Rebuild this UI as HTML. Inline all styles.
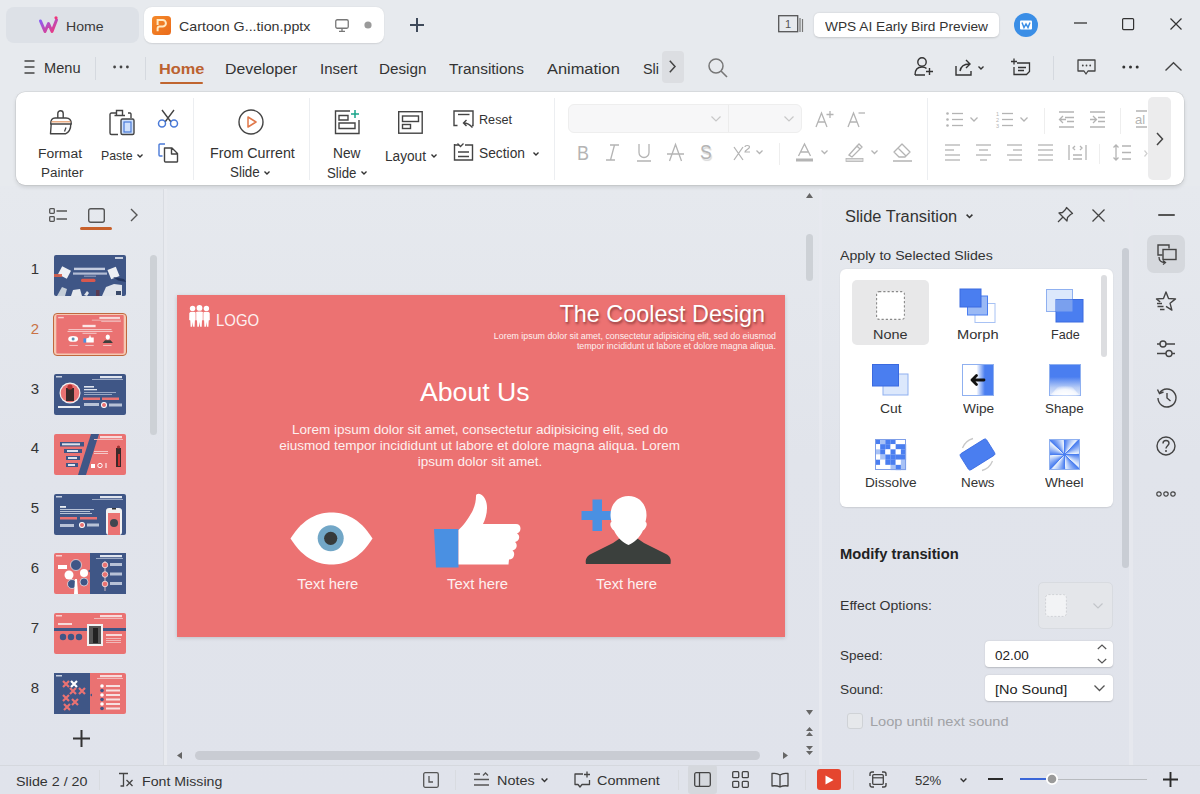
<!DOCTYPE html>
<html><head><meta charset="utf-8">
<style>
*{box-sizing:border-box;margin:0;padding:0}
html,body{width:1200px;height:794px;overflow:hidden}
body{position:relative;background:#e7eaee;font-family:"Liberation Sans",sans-serif;color:#333;font-size:14px}
.a{position:absolute}
.t{position:absolute;white-space:nowrap;line-height:1}
svg{position:absolute;overflow:visible}
</style></head><body>
<div class="a" style="left:0px;top:186px;width:1200px;height:608px;background:linear-gradient(#e6e9ee,#e1e4eb 45%,#e0e3eb);"></div>
<div class="a" style="left:6px;top:7px;width:133px;height:36px;background:#dde1e7;border-radius:8px;"></div>
<svg style="left:39px;top:16px;" width="20" height="18" viewBox="0 0 20 18"><defs><linearGradient id="wg" x1="0" y1="0" x2="1" y2="1"><stop offset="0" stop-color="#8a5cf6"/><stop offset="1" stop-color="#f0367a"/></linearGradient></defs>
<path d="M1.5 5 L6 15.5 L9.5 7.5 L13 15.5 L17.5 4" fill="none" stroke="url(#wg)" stroke-width="3" stroke-linejoin="round" stroke-linecap="round"/>
<circle cx="17" cy="1.8" r="1.6" fill="#f0367a"/></svg>
<div class="t" style="left:66.30px;top:20.18px;font-size:13.01px;color:#3a3a3a;transform:scaleX(1.085);transform-origin:0 0;">Home</div>
<div class="a" style="left:144px;top:7px;width:240px;height:36px;background:#fff;border-radius:8px;box-shadow:0 0.5px 1.5px rgba(0,0,0,.10);"></div>
<svg style="left:151.7px;top:15.7px;" width="19" height="19" viewBox="0 0 19 19"><defs><linearGradient id="pg" x1="0" y1="0" x2="1" y2="1"><stop offset="0" stop-color="#f58a2a"/><stop offset="1" stop-color="#ea6a1a"/></linearGradient></defs>
<rect x="0" y="0" width="19" height="19" rx="3.5" fill="url(#pg)"/>
<path d="M5.6 15.3 V12.6 Q5.6 10.6 7.8 10.6 H10.6 A3.3 3.3 0 0 0 10.6 4 H5.6 V9" fill="none" stroke="#ffe9c2" stroke-width="2"/></svg>
<div class="t" style="left:178.50px;top:19.84px;font-size:13.42px;color:#333;transform:scaleX(1.062);transform-origin:0 0;">Cartoon G...tion.pptx</div>
<svg style="left:335px;top:19px;" width="14" height="13" viewBox="0 0 14 13"><rect x="0.75" y="0.75" width="12.5" height="8.5" rx="1.5" fill="none" stroke="#777" stroke-width="1.3"/>
<path d="M4 12.3 H10 M7 9.5 V12" stroke="#777" stroke-width="1.3"/></svg>
<svg style="left:364px;top:21px;" width="8" height="8" viewBox="0 0 8 8"><circle cx="4" cy="4" r="3.6" fill="#9a9a9a"/></svg>
<svg style="left:410px;top:18px;" width="14" height="14" viewBox="0 0 14 14"><path d="M7 0 V14 M0 7 H14" stroke="#3f4a5a" stroke-width="2"/></svg>
<svg style="left:778px;top:15px;" width="26" height="18" viewBox="0 0 26 18"><rect x="0.7" y="0.7" width="19" height="16" fill="none" stroke="#555" stroke-width="1.3"/>
<text x="10" y="13.2" font-size="11" text-anchor="middle" fill="#555" font-family="Liberation Sans">1</text>
<path d="M22 3 V17 M24.5 4 V17" stroke="#777" stroke-width="1.2"/></svg>
<div class="a" style="left:814px;top:13px;width:184.5px;height:24px;background:#fff;border-radius:5px;box-shadow:0 0.5px 2px rgba(0,0,0,.15);"></div>
<div class="t" style="left:825.00px;top:20.27px;font-size:13.15px;color:#333;transform:scaleX(1.043);transform-origin:0 0;">WPS AI Early Bird Preview</div>
<svg style="left:1014px;top:13px;" width="24" height="24" viewBox="0 0 24 24"><circle cx="12" cy="12" r="12" fill="#3a8ee6"/>
<rect x="6" y="7.5" width="12" height="9" rx="1" fill="#fff"/>
<path d="M8 9.5 L10 14.5 L12 11 L14 14.5 L16 9.5" fill="none" stroke="#3a8ee6" stroke-width="1.5"/></svg>
<svg style="left:1074px;top:22px;" width="13" height="2" viewBox="0 0 13 2"><path d="M0 1 H13" stroke="#333" stroke-width="1.3"/></svg>
<svg style="left:1122px;top:18px;" width="12" height="12" viewBox="0 0 12 12"><rect x="0.6" y="0.6" width="11" height="11" rx="1" fill="none" stroke="#333" stroke-width="1.2"/></svg>
<svg style="left:1170px;top:18px;" width="12" height="12" viewBox="0 0 12 12"><path d="M0.5 0.5 L11.5 11.5 M11.5 0.5 L0.5 11.5" stroke="#333" stroke-width="1.2"/></svg>
<svg style="left:24px;top:60px;" width="11" height="14" viewBox="0 0 11 14"><path d="M0.5 1 H10.5 M0.5 7 H10.5 M0.5 13 H10.5" stroke="#444" stroke-width="1.4"/></svg>
<div class="t" style="left:44.00px;top:61.36px;font-size:14.11px;color:#333;transform:scaleX(1.035);transform-origin:0 0;">Menu</div>
<div class="a" style="left:95px;top:57px;width:1px;height:23px;background:#d5d9df;"></div>
<svg style="left:113px;top:65px;" width="16" height="4" viewBox="0 0 16 4"><circle cx="1.6" cy="2" r="1.4" fill="#444"/><circle cx="8" cy="2" r="1.4" fill="#444"/><circle cx="14.4" cy="2" r="1.4" fill="#444"/></svg>
<div class="a" style="left:145px;top:57px;width:1px;height:23px;background:#d5d9df;"></div>
<div class="t" style="left:158.75px;top:61.21px;font-size:15.34px;color:#bb6230;font-weight:700;transform:scaleX(1.066);transform-origin:0 0;">Home</div>
<div class="a" style="left:160px;top:81.5px;width:43px;height:2.3px;background:#c0652f;border-radius:2px;"></div>
<div class="t" style="left:224.50px;top:61.21px;font-size:15.34px;color:#333;transform:scaleX(1.033);transform-origin:0 0;">Developer</div>
<div class="t" style="left:319.50px;top:61.21px;font-size:15.34px;color:#333;transform:scaleX(0.978);transform-origin:0 0;">Insert</div>
<div class="t" style="left:378.75px;top:61.21px;font-size:15.34px;color:#333;transform:scaleX(0.994);transform-origin:0 0;">Design</div>
<div class="t" style="left:449.00px;top:61.21px;font-size:15.34px;color:#333;transform:scaleX(1.007);transform-origin:0 0;">Transitions</div>
<div class="t" style="left:547.00px;top:61.21px;font-size:15.34px;color:#333;transform:scaleX(1.070);transform-origin:0 0;">Animation</div>
<div class="t" style="left:643.00px;top:61.21px;font-size:15.34px;color:#333;transform:scaleX(0.940);transform-origin:0 0;">Sli</div>
<div class="a" style="left:662px;top:51px;width:22px;height:32px;background:#dcdee2;border-radius:4px;"></div>
<svg style="left:669px;top:60px;" width="7" height="13" viewBox="0 0 7 13"><path d="M0.8 0.8 L6 6.5 L0.8 12.2" fill="none" stroke="#444" stroke-width="1.5"/></svg>
<svg style="left:708px;top:58px;" width="20" height="20" viewBox="0 0 20 20"><circle cx="8" cy="8" r="7" fill="none" stroke="#777" stroke-width="1.5"/><path d="M13 13 L19 19" stroke="#777" stroke-width="1.6"/></svg>
<svg style="left:914px;top:57px;" width="20" height="19" viewBox="0 0 20 19"><circle cx="8" cy="5" r="4.2" fill="none" stroke="#333" stroke-width="1.4"/>
<path d="M1 18 C1 12.5 4 10 8 10 C10 10 11.5 10.5 12.5 11.5 M1 18 H11" fill="none" stroke="#333" stroke-width="1.4"/>
<path d="M15.5 11 V18 M12 14.5 H19" stroke="#333" stroke-width="1.4"/></svg>
<svg style="left:955px;top:59px;" width="20" height="17" viewBox="0 0 20 17"><path d="M1 7 V16 H16 V12" fill="none" stroke="#333" stroke-width="1.4"/>
<path d="M5 12 C6 7 9 5 14 5 M11 1 L15 5 L11 9" fill="none" stroke="#333" stroke-width="1.4"/></svg>
<svg style="left:978px;top:66px;" width="6" height="4" viewBox="0 0 6 4"><path d="M0.5 0.5 L3 3 L5.5 0.5" fill="none" stroke="#333" stroke-width="1.4"/></svg>
<svg style="left:1011px;top:58px;" width="20" height="18" viewBox="0 0 20 18"><path d="M0 3.5 H6 M3 0.5 V6.5" stroke="#333" stroke-width="1.3"/>
<path d="M6 5 H18.5 V13.5 L15.5 16.5 H3 V9" fill="none" stroke="#333" stroke-width="1.3"/>
<path d="M7 9.5 H15 M7 12.5 H13" stroke="#333" stroke-width="1.3"/></svg>
<div class="a" style="left:1053px;top:56px;width:1px;height:24px;background:#d5d9df;"></div>
<svg style="left:1077px;top:59px;" width="19" height="17" viewBox="0 0 19 17"><path d="M1 1 H18 V12 H11 L9 15 L7 12 H1 Z" fill="none" stroke="#444" stroke-width="1.3" stroke-linejoin="round"/>
<circle cx="5.8" cy="6.5" r="0.9" fill="#444"/><circle cx="9.5" cy="6.5" r="0.9" fill="#444"/><circle cx="13.2" cy="6.5" r="0.9" fill="#444"/></svg>
<svg style="left:1122px;top:65px;" width="17" height="4" viewBox="0 0 17 4"><circle cx="1.8" cy="2" r="1.5" fill="#333"/><circle cx="8.5" cy="2" r="1.5" fill="#333"/><circle cx="15.2" cy="2" r="1.5" fill="#333"/></svg>
<svg style="left:1165px;top:62px;" width="17" height="9" viewBox="0 0 17 9"><path d="M0.5 8.5 L8.5 0.8 L16.5 8.5" fill="none" stroke="#444" stroke-width="1.4"/></svg>
<div class="a" style="left:15.8px;top:92px;width:1168.2px;height:92.5px;background:#fff;border-radius:9px;box-shadow:0 2px 4px rgba(0,0,0,.13),0 0 0.5px 0.5px rgba(0,0,0,.10);"></div>
<svg style="left:49px;top:110px;" width="24" height="25" viewBox="0 0 24 25"><path d="M8.8 8 V3.5 A2.7 2.7 0 0 1 14.2 3.5 V8" fill="none" stroke="#444" stroke-width="1.4"/>
<path d="M1.7 14 C1.7 10 3 8 6 8 H17 C20 8 22.3 10 22.3 14 Z" fill="none" stroke="#444" stroke-width="1.4" stroke-linejoin="round"/>
<path d="M2.5 11.8 H21.5" stroke="#e8a070" stroke-width="1.3"/>
<path d="M2.2 14 L1.5 23.8 H16.5 C19.5 22.5 21.8 19 21.8 14" fill="none" stroke="#444" stroke-width="1.4" stroke-linejoin="round"/>
<path d="M15.5 21.5 L17 17.5" stroke="#444" stroke-width="1.3"/></svg>
<div class="t" style="left:38.20px;top:146.70px;font-size:13.70px;color:#333;transform:scaleX(1.015);transform-origin:0 0;">Format</div>
<div class="t" style="left:41.00px;top:166.00px;font-size:13.70px;color:#333;transform:scaleX(0.981);transform-origin:0 0;">Painter</div>
<svg style="left:109px;top:109px;" width="27" height="27" viewBox="0 0 27 27"><path d="M7 4 H2.5 A1.5 1.5 0 0 0 1 5.5 V24 A1.5 1.5 0 0 0 2.5 25.5 H9" fill="none" stroke="#444" stroke-width="1.4"/>
<path d="M7.5 1.5 H13.5 V6.5 H7.5 Z M5.5 6.5 H16" fill="none" stroke="#444" stroke-width="1.4"/>
<path d="M19 4 H21 A1.2 1.2 0 0 1 22 5.5 V9" fill="none" stroke="#444" stroke-width="1.4"/>
<rect x="12" y="10" width="13" height="15.5" rx="1.5" fill="#cfe0fb" stroke="#444" stroke-width="1.4"/>
<rect x="15" y="13" width="7" height="10" fill="none" stroke="#4a7ad8" stroke-width="1.2"/></svg>
<div class="t" style="left:100.60px;top:149.24px;font-size:13.42px;color:#333;transform:scaleX(0.921);transform-origin:0 0;">Paste</div>
<svg style="left:136.8px;top:153.8px;" width="6" height="4" viewBox="0 0 6 4"><path d="M0.5 0.5 L3 3 L5.5 0.5" fill="none" stroke="#333" stroke-width="1.4"/></svg>
<svg style="left:157px;top:109px;" width="22" height="19" viewBox="0 0 22 19"><path d="M5 1 L14 13 M17 1 L8 13" stroke="#444" stroke-width="1.4"/>
<circle cx="5" cy="14.5" r="3.5" fill="none" stroke="#4a7ad8" stroke-width="1.5"/>
<circle cx="17" cy="14.5" r="3.5" fill="none" stroke="#4a7ad8" stroke-width="1.5"/></svg>
<svg style="left:158px;top:142px;" width="21" height="21" viewBox="0 0 21 21"><path d="M7 2 H2 A1 1 0 0 0 1 3 V13 A1 1 0 0 0 2 14 H4.5" fill="none" stroke="#4a7ad8" stroke-width="1.4"/>
<path d="M6.5 6 H14 L19.5 11.5 V19.5 A0.8 0.8 0 0 1 18.5 20 H7.5 A1 1 0 0 1 6.5 19 Z M13.5 6 V12 H19.5" fill="none" stroke="#444" stroke-width="1.4" stroke-linejoin="round"/></svg>
<div class="a" style="left:193px;top:98px;width:1px;height:82px;background:#eceef1;"></div>
<svg style="left:238px;top:109px;" width="26" height="26" viewBox="0 0 26 26"><circle cx="13" cy="13" r="12" fill="none" stroke="#444" stroke-width="1.4"/>
<path d="M10 8 L18 13 L10 18 Z" fill="none" stroke="#e0784a" stroke-width="1.5" stroke-linejoin="round"/></svg>
<div class="t" style="left:209.80px;top:146.67px;font-size:13.97px;color:#333;transform:scaleX(1.021);transform-origin:0 0;">From Current</div>
<div class="t" style="left:230.20px;top:165.32px;font-size:14.38px;color:#333;transform:scaleX(0.931);transform-origin:0 0;">Slide</div>
<svg style="left:264.3px;top:171px;" width="6" height="4" viewBox="0 0 6 4"><path d="M0.5 0.5 L3 3 L5.5 0.5" fill="none" stroke="#333" stroke-width="1.4"/></svg>
<div class="a" style="left:309px;top:98px;width:1px;height:82px;background:#eceef1;"></div>
<svg style="left:334px;top:109px;" width="27" height="26" viewBox="0 0 27 26"><path d="M16 2 H1.5 V24.5 H25 V11" fill="none" stroke="#444" stroke-width="1.4"/>
<path d="M5 6.5 H14 V11 H5 Z M5 14 H21 V19.5 H5 Z" fill="none" stroke="#444" stroke-width="1.4"/>
<path d="M21 1 V9 M17 5 H25" stroke="#1aa58a" stroke-width="1.5"/></svg>
<div class="t" style="left:332.50px;top:146.97px;font-size:13.97px;color:#333;transform:scaleX(0.982);transform-origin:0 0;">New</div>
<div class="t" style="left:326.50px;top:165.62px;font-size:14.38px;color:#333;transform:scaleX(0.922);transform-origin:0 0;">Slide</div>
<svg style="left:360.5px;top:171px;" width="6" height="4" viewBox="0 0 6 4"><path d="M0.5 0.5 L3 3 L5.5 0.5" fill="none" stroke="#333" stroke-width="1.4"/></svg>
<svg style="left:398px;top:111px;" width="25" height="23" viewBox="0 0 25 23"><rect x="0.7" y="0.7" width="23.5" height="21.5" fill="none" stroke="#444" stroke-width="1.4"/>
<rect x="4.5" y="5" width="16" height="5.5" fill="none" stroke="#444" stroke-width="1.4"/>
<rect x="4.5" y="13.5" width="8" height="4" fill="none" stroke="#444" stroke-width="1.4"/></svg>
<div class="t" style="left:384.50px;top:149.02px;font-size:14.38px;color:#333;transform:scaleX(0.949);transform-origin:0 0;">Layout</div>
<svg style="left:430.5px;top:154px;" width="6" height="4" viewBox="0 0 6 4"><path d="M0.5 0.5 L3 3 L5.5 0.5" fill="none" stroke="#333" stroke-width="1.4"/></svg>
<svg style="left:453px;top:110px;" width="21" height="19" viewBox="0 0 21 19"><path d="M4.5 15.5 H1 V1 H20 V15.5 H19" fill="none" stroke="#444" stroke-width="1.4"/>
<path d="M5 4.5 H16.5" stroke="#444" stroke-width="1.4"/>
<path d="M19.5 17.5 C17 14.5 14.5 13 10.5 13 M13.5 10 L10.5 13 L13.5 16" fill="none" stroke="#444" stroke-width="1.4"/></svg>
<div class="t" style="left:479.00px;top:113.40px;font-size:13.70px;color:#333;transform:scaleX(0.923);transform-origin:0 0;">Reset</div>
<svg style="left:453px;top:143px;" width="21" height="18" viewBox="0 0 21 18"><path d="M1.5 1 V17 H19.5 V2 H12 M6 2 H1.5" fill="none" stroke="#444" stroke-width="1.4"/>
<path d="M4.5 0.5 L7.5 3.5 L10.5 0.5" fill="none" stroke="#444" stroke-width="1.3"/>
<path d="M5 9 H16 M5 13.5 H16" stroke="#444" stroke-width="1.4"/></svg>
<div class="t" style="left:479.00px;top:146.32px;font-size:14.38px;color:#333;transform:scaleX(0.959);transform-origin:0 0;">Section</div>
<svg style="left:532.5px;top:151.5px;" width="6" height="4" viewBox="0 0 6 4"><path d="M0.5 0.5 L3 3 L5.5 0.5" fill="none" stroke="#333" stroke-width="1.4"/></svg>
<div class="a" style="left:554px;top:98px;width:1px;height:82px;background:#eceef1;"></div>
<div class="a" style="left:568px;top:104px;width:234px;height:29px;background:#f7f7f8;border-radius:6px;border:1px solid #eeeeee;"></div>
<div class="a" style="left:728px;top:105px;width:1px;height:27px;background:#ececec;"></div>
<svg style="left:711px;top:116px;" width="10" height="6" viewBox="0 0 10 6"><path d="M0.5 0.5 L5 5 L9.5 0.5" fill="none" stroke="#c8c8c8" stroke-width="1.2"/></svg>
<svg style="left:784px;top:116px;" width="10" height="6" viewBox="0 0 10 6"><path d="M0.5 0.5 L5 5 L9.5 0.5" fill="none" stroke="#c8c8c8" stroke-width="1.2"/></svg>
<svg style="left:815px;top:110px;" width="20" height="18" viewBox="0 0 20 18"><path d="M1 17 L6.5 3 L12 17 M3 12 H10" fill="none" stroke="#b4b4b4" stroke-width="1.3"/>
<path d="M15 1 V8 M11.5 4.5 H18.5" stroke="#b4b4b4" stroke-width="1.3"/></svg>
<svg style="left:847px;top:110px;" width="20" height="18" viewBox="0 0 20 18"><path d="M1 17 L6.5 3 L12 17 M3 12 H10" fill="none" stroke="#b4b4b4" stroke-width="1.3"/>
<path d="M11.5 3 H18" stroke="#b4b4b4" stroke-width="1.3"/></svg>
<div class="t" style="left:576.50px;top:142.67px;font-size:20px;color:#b4b4b4;transform:scaleX(0.9);transform-origin:left;">B</div>
<svg style="left:605px;top:144px;" width="15" height="17" viewBox="0 0 15 17"><path d="M5 1 H14 M1 16 H10 M9.5 1 L5.5 16" fill="none" stroke="#b4b4b4" stroke-width="1.3"/></svg>
<svg style="left:636px;top:143px;" width="16" height="19" viewBox="0 0 16 19"><path d="M3 1 V9.5 A5 5 0 0 0 13 9.5 V1 M1 18 H15" fill="none" stroke="#b4b4b4" stroke-width="1.3"/></svg>
<svg style="left:666px;top:143px;" width="19" height="19" viewBox="0 0 19 19"><path d="M3.5 18 L9.5 1.5 L15.5 18 M1 11 H18" fill="none" stroke="#b4b4b4" stroke-width="1.3"/></svg>
<div class="t" style="left:699.50px;top:143.49px;font-size:19.5px;color:#b4b4b4;transform:scaleX(0.9);transform-origin:left;text-shadow:1px 1.5px 1px #d8d8d8;">S</div>
<svg style="left:733px;top:144px;" width="18" height="17" viewBox="0 0 18 17"><path d="M1 3 L10 16 M10 3 L1 16" stroke="#b4b4b4" stroke-width="1.3"/><path d="M12 3 C12 1 16.5 1 16.5 3 C16.5 5 12 6 12 8 H17" fill="none" stroke="#b4b4b4" stroke-width="1.2"/></svg>
<svg style="left:756px;top:150px;" width="7" height="5" viewBox="0 0 7 5"><path d="M0.5 0.5 L3.5 3.5 L6.5 0.5" fill="none" stroke="#b4b4b4" stroke-width="1.3"/></svg>
<div class="a" style="left:779px;top:143px;width:1px;height:22px;background:#eeeeee;"></div>
<svg style="left:795px;top:143px;" width="19" height="19" viewBox="0 0 19 19"><path d="M3.5 13 L9.5 1 L15.5 13 M5.5 9 H13.5" fill="none" stroke="#b4b4b4" stroke-width="1.3"/><rect x="1" y="15.5" width="17" height="3" fill="#b4b4b4"/></svg>
<svg style="left:821px;top:150px;" width="7" height="5" viewBox="0 0 7 5"><path d="M0.5 0.5 L3.5 3.5 L6.5 0.5" fill="none" stroke="#b4b4b4" stroke-width="1.3"/></svg>
<svg style="left:845px;top:143px;" width="20" height="19" viewBox="0 0 20 19"><path d="M4 12 L12 3 L15 6 L7 14 Z M12 3 L14 1 L17 4 L15 6" fill="none" stroke="#b4b4b4" stroke-width="1.3"/><rect x="1" y="15.5" width="17" height="3" fill="#dcdcdc" stroke="#b4b4b4" stroke-width="0.8"/></svg>
<svg style="left:871px;top:150px;" width="7" height="5" viewBox="0 0 7 5"><path d="M0.5 0.5 L3.5 3.5 L6.5 0.5" fill="none" stroke="#b4b4b4" stroke-width="1.3"/></svg>
<svg style="left:892px;top:143px;" width="21" height="19" viewBox="0 0 21 19"><path d="M7 14 L2 9 L10 1 L18 9 L13 14 Z M6 5 L14 13 M1 18 H20" fill="none" stroke="#b4b4b4" stroke-width="1.3" stroke-linejoin="round"/></svg>
<div class="a" style="left:927px;top:98px;width:1px;height:82px;background:#eceef1;"></div>
<svg style="left:946px;top:112px;" width="18" height="16" viewBox="0 0 18 16"><circle cx="1.5" cy="1.5" r="1.3" fill="#b4b4b4"/><circle cx="1.5" cy="7.5" r="1.3" fill="#b4b4b4"/><circle cx="1.5" cy="13.5" r="1.3" fill="#b4b4b4"/><path d="M6 1.5 H17" stroke="#b4b4b4" stroke-width="1.3"/><path d="M6 7.5 H17" stroke="#b4b4b4" stroke-width="1.3"/><path d="M6 13.5 H17" stroke="#b4b4b4" stroke-width="1.3"/></svg>
<svg style="left:970px;top:117px;" width="8" height="5" viewBox="0 0 8 5"><path d="M0.5 0.5 L4 4 L7.5 0.5" fill="none" stroke="#b4b4b4" stroke-width="1.3"/></svg>
<svg style="left:996px;top:111px;" width="18" height="17" viewBox="0 0 18 17"><text x="0" y="5" font-size="5.5" fill="#b4b4b4" font-family="Liberation Sans">1</text><text x="0" y="11" font-size="5.5" fill="#b4b4b4" font-family="Liberation Sans">2</text><text x="0" y="16.5" font-size="5.5" fill="#b4b4b4" font-family="Liberation Sans">3</text><path d="M6 2.5 H17" stroke="#b4b4b4" stroke-width="1.3"/><path d="M6 8.5 H17" stroke="#b4b4b4" stroke-width="1.3"/><path d="M6 14.5 H17" stroke="#b4b4b4" stroke-width="1.3"/></svg>
<svg style="left:1020px;top:117px;" width="8" height="5" viewBox="0 0 8 5"><path d="M0.5 0.5 L4 4 L7.5 0.5" fill="none" stroke="#b4b4b4" stroke-width="1.3"/></svg>
<div class="a" style="left:1044px;top:108px;width:1px;height:26px;background:#eeeeee;"></div>
<svg style="left:1058px;top:111px;" width="17" height="17" viewBox="0 0 17 17"><path d="M1 1 H16 M1 16 H16 M7 6.5 H16 M9 10.5 H16 M5 5 L1.5 8.5 L5 12 M1.5 8.5 H8" fill="none" stroke="#b4b4b4" stroke-width="1.3"/></svg>
<svg style="left:1089px;top:111px;" width="17" height="17" viewBox="0 0 17 17"><path d="M1 1 H16 M1 16 H16 M9 6.5 H16 M9 10.5 H16 M4 5 L7.5 8.5 L4 12 M1 8.5 H7.5" fill="none" stroke="#b4b4b4" stroke-width="1.3"/></svg>
<div class="a" style="left:1120px;top:108px;width:1px;height:26px;background:#eeeeee;"></div>
<svg style="left:1135px;top:110px;" width="13" height="18" viewBox="0 0 13 18"><path d="M1 1 H12 M1 17 H12" stroke="#b4b4b4" stroke-width="1.3"/><text x="0" y="13.5" font-size="13" fill="#b4b4b4" font-family="Liberation Sans">al</text></svg>
<svg style="left:945px;top:144px;" width="16" height="17" viewBox="0 0 16 17"><path d="M0 1 H15" stroke="#b4b4b4" stroke-width="1.3"/><path d="M0 6 H9" stroke="#b4b4b4" stroke-width="1.3"/><path d="M0 11 H15" stroke="#b4b4b4" stroke-width="1.3"/><path d="M0 16 H15" stroke="#b4b4b4" stroke-width="1.3"/></svg>
<svg style="left:976px;top:144px;" width="16" height="17" viewBox="0 0 16 17"><path d="M0 1 H15" stroke="#b4b4b4" stroke-width="1.3"/><path d="M3 6 H12" stroke="#b4b4b4" stroke-width="1.3"/><path d="M0 11 H15" stroke="#b4b4b4" stroke-width="1.3"/><path d="M4 16 H11" stroke="#b4b4b4" stroke-width="1.3"/></svg>
<svg style="left:1007px;top:144px;" width="16" height="17" viewBox="0 0 16 17"><path d="M0 1 H15" stroke="#b4b4b4" stroke-width="1.3"/><path d="M6 6 H15" stroke="#b4b4b4" stroke-width="1.3"/><path d="M0 11 H15" stroke="#b4b4b4" stroke-width="1.3"/><path d="M2 16 H15" stroke="#b4b4b4" stroke-width="1.3"/></svg>
<svg style="left:1038px;top:144px;" width="16" height="17" viewBox="0 0 16 17"><path d="M0 1 H15" stroke="#b4b4b4" stroke-width="1.3"/><path d="M0 6 H15" stroke="#b4b4b4" stroke-width="1.3"/><path d="M0 11 H15" stroke="#b4b4b4" stroke-width="1.3"/><path d="M0 16 H15" stroke="#b4b4b4" stroke-width="1.3"/></svg>
<svg style="left:1068px;top:144px;" width="19" height="17" viewBox="0 0 19 17"><path d="M1 1 V16 M18 1 V16 M5 11 H14 M5 15 H14 M7 2 L5 4 L7 6 M12 2 L14 4 L12 6" fill="none" stroke="#b4b4b4" stroke-width="1.3"/></svg>
<div class="a" style="left:1099px;top:144px;width:1px;height:20px;background:#eeeeee;"></div>
<svg style="left:1113px;top:144px;" width="19" height="17" viewBox="0 0 19 17"><path d="M3 1 V16 M0.5 3.5 L3 1 L5.5 3.5 M0.5 13.5 L3 16 L5.5 13.5 M9 2 H18 M9 8.5 H18 M9 15 H18" fill="none" stroke="#b4b4b4" stroke-width="1.3"/></svg>
<svg style="left:1144px;top:150px;" width="4" height="7" viewBox="0 0 4 7"><path d="M0.5 0.5 L3 3.5 L0.5 6.5" fill="none" stroke="#d0d0d0" stroke-width="1.2"/></svg>
<div class="a" style="left:1148px;top:97px;width:23px;height:83px;background:#ececed;border-radius:5px;"></div>
<svg style="left:1156px;top:132px;" width="8" height="14" viewBox="0 0 8 14"><path d="M1 1 L6.5 7 L1 13" fill="none" stroke="#444" stroke-width="1.5"/></svg>
<svg style="left:49px;top:208px;" width="19" height="15" viewBox="0 0 19 15"><rect x="0.7" y="0.7" width="4.6" height="4.6" rx="0.8" fill="none" stroke="#555" stroke-width="1.3"/>
<rect x="0.7" y="8.7" width="4.6" height="4.6" rx="0.8" fill="none" stroke="#555" stroke-width="1.3"/>
<path d="M7.5 3 H18 M7.5 11 H18" stroke="#555" stroke-width="1.3"/></svg>
<svg style="left:88px;top:208px;" width="17" height="15" viewBox="0 0 17 15"><rect x="0.7" y="0.7" width="15.6" height="13.6" rx="2" fill="none" stroke="#555" stroke-width="1.4"/></svg>
<div class="a" style="left:80px;top:227px;width:32px;height:3px;background:#c8602a;border-radius:2px;"></div>
<svg style="left:130px;top:208px;" width="8" height="14" viewBox="0 0 8 14"><path d="M1 1 L7 7 L1 13" fill="none" stroke="#555" stroke-width="1.4"/></svg>
<div class="a" style="left:150px;top:255px;width:7px;height:180px;background:#cdd1d6;border-radius:4px;"></div>
<svg style="left:54px;top:254.5px;" width="72" height="41" viewBox="0 0 72 41"><rect width="72" height="41" rx="2" fill="#3f5686"/>
<rect x="20" y="12.7" width="31" height="2.4" fill="#c5cde0"/><rect x="19" y="17.5" width="34" height="2.2" fill="#b3bdd4"/><rect x="30" y="20.6" width="12" height="1.2" fill="#8a98b8"/>
<rect x="27" y="23.7" width="14.5" height="3.2" rx="1.5" fill="#d8584e"/>
<g transform="rotate(28 10.5 17.5)"><rect x="5.5" y="13" width="10" height="9" fill="#eef0f4"/></g><rect x="0" y="19" width="8" height="3" fill="#d8604a" opacity="0.9"/>
<g transform="rotate(-22 59.5 18)"><rect x="55" y="13" width="9" height="10" fill="#eef0f4"/></g><path d="M59 22 L70 24 L72 27 L64 25.5 Z" fill="#243660"/>
<path d="M48 41 L52 32 L60 29 L68 30 L68 41 Z" fill="#dfe3ea"/><rect x="62" y="36" width="5" height="4" fill="#3a4a6a"/>
<path d="M17 41 L19 35 L26 34 L28 41 Z" fill="#e6e9ee"/><path d="M30 40 L33 36 L35 38 L33 41 Z" fill="#e0e4ea"/>
<path d="M3 41 L8 32 L13 34 L11 41 Z" fill="#c5ced8"/><rect x="42" y="35" width="3.5" height="6" fill="#5a3a50"/>
<rect x="61" y="2" width="8" height="2" fill="#c8d0e0"/></svg>
<div class="t" style="left:25.00px;width:20px;text-align:center;top:261.30px;font-size:15px;color:#333;">1</div>
<div class="a" style="left:52.8px;top:312.8px;width:74.4px;height:43px;background:#f6c8b2;border-radius:4px;border:1.3px solid #c0683e;"></div>
<svg style="left:55px;top:315.3px;" width="70" height="38.4" viewBox="0 0 72 41"><rect width="72" height="41" rx="1" fill="#ea7272"/>
<rect x="2" y="2" width="6" height="1.5" fill="#f6d0d0"/><rect x="46" y="2" width="22" height="2.2" fill="#f7dada"/><rect x="38" y="5" width="31" height="1" fill="#f0b8b8"/><rect x="48" y="6.5" width="21" height="1" fill="#f0b8b8"/>
<rect x="28" y="10.5" width="14" height="2.5" fill="#fbe6e6"/>
<rect x="13" y="15" width="46" height="1.1" fill="#f5c8c8"/><rect x="12" y="17" width="48" height="1.1" fill="#f5c8c8"/><rect x="28" y="19" width="15" height="1.1" fill="#f5c8c8"/>
<ellipse cx="18" cy="25.5" rx="5.3" ry="3.2" fill="#fff"/><circle cx="18" cy="25.5" r="1.6" fill="#5f8fb0"/>
<rect x="29" y="25" width="3" height="4.5" fill="#4a90e2"/><path d="M32 25 L35 24 L36 21 L37 24 L40 24 L40 29.5 L32 29.5 Z" fill="#fff"/>
<ellipse cx="55" cy="23.5" rx="2.3" ry="2.8" fill="#fff"/><path d="M49.5 30 L52 27 L58 27 L60.5 30 Z" fill="#3a3f3c"/>
<rect x="14" y="32" width="9" height="1" fill="#f5c8c8"/><rect x="31" y="32" width="9" height="1" fill="#f5c8c8"/><rect x="50" y="32" width="9" height="1" fill="#f5c8c8"/></svg>
<div class="t" style="left:25.00px;width:20px;text-align:center;top:320.80px;font-size:15px;color:#c97245;">2</div>
<svg style="left:54px;top:374px;" width="72" height="41" viewBox="0 0 72 41"><rect width="72" height="41" rx="2" fill="#3f5686"/>
<rect x="2" y="2" width="6" height="1.5" fill="#c8d0e0"/><rect x="46" y="2" width="22" height="2.2" fill="#dfe4ee"/><rect x="38" y="5" width="31" height="1" fill="#9aa8c4"/>
<circle cx="16" cy="19" r="10.5" fill="#f2f2f2"/><circle cx="16" cy="19" r="9.3" fill="#ea7272"/><rect x="12" y="14" width="8" height="13" fill="#3a2a2a"/><circle cx="16" cy="13" r="2.6" fill="#b03030"/>
<rect x="30" y="12" width="10" height="1.6" fill="#dfe4ee"/><rect x="30" y="15" width="13" height="1.3" fill="#dfe4ee"/><rect x="30" y="18" width="32" height="1" fill="#9aa8c4"/><rect x="30" y="20" width="28" height="1" fill="#9aa8c4"/>
<rect x="29" y="23.5" width="17" height="2.5" fill="#ea7272"/><rect x="48" y="23.5" width="17" height="2.5" fill="#ea7272"/>
<rect x="4" y="32" width="22" height="2" fill="#e8ecf2"/><circle cx="50" cy="31" r="3" fill="#fff"/><circle cx="50" cy="31" r="2" fill="#ea7272"/><rect x="30" y="29" width="15" height="3" fill="#b8c2d6"/><rect x="55" y="29.5" width="13" height="3" fill="#b8c2d6"/></svg>
<div class="t" style="left:25.00px;width:20px;text-align:center;top:380.80px;font-size:15px;color:#333;">3</div>
<svg style="left:54px;top:433.5px;" width="72" height="41" viewBox="0 0 72 41"><rect width="72" height="41" rx="2" fill="#ea7272"/>
<path d="M37 0 L45 0 L32 41 L24 41 Z" fill="#3f5686"/>
<rect x="6" y="8" width="24" height="4.5" fill="#3f5686"/><rect x="10" y="15" width="18" height="4" fill="#3f5686"/><rect x="12" y="22" width="14" height="4" fill="#3f5686"/><rect x="12" y="29" width="12" height="4" fill="#3f5686"/>
<rect x="8" y="9.3" width="18" height="2" fill="#dde2ec"/><rect x="13" y="16" width="11" height="2" fill="#dde2ec"/><rect x="14" y="23" width="9" height="2" fill="#dde2ec"/><rect x="14" y="30" width="7" height="2" fill="#dde2ec"/>
<rect x="46" y="2" width="22" height="2.2" fill="#f7dada"/><rect x="40" y="5" width="29" height="1" fill="#f0b8b8"/>
<rect x="40" y="17" width="14" height="1" fill="#f5c8c8"/><rect x="40" y="19" width="14" height="1" fill="#f5c8c8"/>
<rect x="37" y="30" width="4" height="4" fill="#fff"/><circle cx="46" cy="31.5" r="2.2" fill="none" stroke="#fff" stroke-width="1"/><path d="M52 29 V34" stroke="#fff" stroke-width="1"/>
<rect x="62" y="14" width="5" height="19" fill="#3a2a2a"/><circle cx="64.5" cy="13" r="1.6" fill="#a03030"/><rect x="64" y="20" width="2" height="12" fill="#c83030"/></svg>
<div class="t" style="left:25.00px;width:20px;text-align:center;top:440.30px;font-size:15px;color:#333;">4</div>
<svg style="left:54px;top:493.5px;" width="72" height="41" viewBox="0 0 72 41"><rect width="72" height="41" rx="2" fill="#3f5686"/>
<rect x="2" y="2" width="6" height="1.5" fill="#c8d0e0"/><rect x="46" y="2" width="22" height="2.2" fill="#dfe4ee"/><rect x="38" y="5" width="31" height="1" fill="#9aa8c4"/>
<rect x="6" y="12" width="6" height="1.8" fill="#e8ecf2"/><rect x="6" y="15" width="34" height="1" fill="#b8c2d6"/><rect x="6" y="17" width="30" height="1" fill="#b8c2d6"/><rect x="6" y="19" width="32" height="1" fill="#b8c2d6"/>
<rect x="6" y="23" width="17" height="2.5" fill="#ea7272"/><rect x="26" y="23" width="17" height="2.5" fill="#ea7272"/>
<rect x="6" y="30" width="14" height="3" fill="#b8c2d6"/><circle cx="28" cy="31" r="3" fill="#fff"/><circle cx="28" cy="31" r="2" fill="#ea7272"/><rect x="33" y="29.5" width="12" height="3" fill="#b8c2d6"/>
<rect x="52" y="14" width="16" height="27" rx="3" fill="#f2f2f2"/><rect x="54" y="19" width="12" height="22" fill="#ea7272"/><circle cx="60" cy="29" r="4" fill="#3f4650"/><rect x="58" y="14" width="4" height="1.5" fill="#333"/></svg>
<div class="t" style="left:25.00px;width:20px;text-align:center;top:500.30px;font-size:15px;color:#333;">5</div>
<svg style="left:54px;top:553px;" width="72" height="41" viewBox="0 0 72 41"><rect width="72" height="41" rx="2" fill="#ea7272"/>
<rect x="36" y="0" width="36" height="41" fill="#3f5686"/>
<path d="M34 18 L36 16.5 L36 19.5 Z" fill="#3f5686"/>
<rect x="2" y="2" width="6" height="1.5" fill="#f6d0d0"/><rect x="46" y="2" width="22" height="2.2" fill="#dfe4ee"/><rect x="42" y="5" width="27" height="1" fill="#9aa8c4"/>
<rect x="4" y="12" width="9" height="4" fill="#fff"/>
<circle cx="22" cy="12" r="5.5" fill="#3f5686" stroke="#fff" stroke-width="0.6"/><circle cx="15" cy="22" r="4.5" fill="#fff"/><circle cx="30" cy="20" r="4" fill="#fff"/><circle cx="18" cy="31" r="4.5" fill="#3f5686" stroke="#fff" stroke-width="0.6"/><circle cx="30" cy="29" r="4" fill="#3f5686" stroke="#fff" stroke-width="0.6"/>
<path d="M20 41 L21 26 L23 26 L24 41 Z" fill="#fff"/>
<path d="M51 8 V38" stroke="#f0d0d0" stroke-width="0.8"/><circle cx="51" cy="12" r="2.8" fill="#ea7272" stroke="#f6e6e6" stroke-width="0.8"/><circle cx="51" cy="21.5" r="2.8" fill="#ea7272" stroke="#f6e6e6" stroke-width="0.8"/><circle cx="51" cy="31" r="2.8" fill="#ea7272" stroke="#f6e6e6" stroke-width="0.8"/>
<rect x="56" y="10" width="12" height="3" fill="#b8c2d6"/><rect x="56" y="19.5" width="12" height="3" fill="#b8c2d6"/><rect x="56" y="29" width="12" height="3" fill="#b8c2d6"/></svg>
<div class="t" style="left:25.00px;width:20px;text-align:center;top:559.80px;font-size:15px;color:#333;">6</div>
<svg style="left:54px;top:613px;" width="72" height="41" viewBox="0 0 72 41"><rect width="72" height="41" rx="2" fill="#ea7272"/>
<rect x="0" y="15" width="72" height="3" fill="#3f5686"/>
<rect x="2" y="2" width="6" height="1.5" fill="#f6d0d0"/><rect x="46" y="2" width="22" height="2.2" fill="#f7dada"/><rect x="40" y="5" width="29" height="1" fill="#f0b8b8"/>
<rect x="4" y="10" width="14" height="2" fill="#f7dada"/>
<circle cx="9" cy="24" r="3.2" fill="#3f5686"/><circle cx="17" cy="24" r="3.2" fill="#3f5686"/><circle cx="25" cy="24" r="3.2" fill="#3f5686"/>
<rect x="33" y="11" width="16" height="22" fill="#f2f2f2"/><rect x="35" y="13" width="12" height="18" fill="#555"/><rect x="39" y="15" width="5" height="15" fill="#222"/>
<rect x="52" y="21" width="16" height="2" fill="#f7dada"/><rect x="52" y="25" width="15" height="1" fill="#f0b8b8"/><rect x="52" y="27" width="15" height="1" fill="#f0b8b8"/><rect x="52" y="29" width="15" height="1" fill="#f0b8b8"/></svg>
<div class="t" style="left:25.00px;width:20px;text-align:center;top:619.80px;font-size:15px;color:#333;">7</div>
<svg style="left:54px;top:673px;" width="72" height="41" viewBox="0 0 72 41"><rect width="72" height="41" rx="2" fill="#ea7272"/>
<rect x="0" y="0" width="36" height="41" fill="#3f5686"/>
<path d="M36 22 L38 20.5 L38 23.5 Z" fill="#3f5686"/>
<rect x="2" y="2" width="6" height="1.5" fill="#c8d0e0"/><rect x="46" y="2" width="22" height="2.2" fill="#f7dada"/><rect x="43" y="5" width="26" height="1" fill="#f0b8b8"/>
<g stroke="#ea7272" stroke-width="2.2"><path d="M9 8 L15 14 M15 8 L9 14"/><path d="M16 15 L22 21 M22 15 L16 21"/><path d="M25 15 L31 21 M31 15 L25 21"/><path d="M9 22 L15 28 M15 22 L9 28"/><path d="M18 26 L24 32 M24 26 L18 32"/><path d="M10 31 L16 37 M16 31 L10 37"/></g>
<path d="M17 8 L23 14 M23 8 L17 14" stroke="#fff" stroke-width="2.2"/>
<g fill="#fff"><circle cx="48" cy="13" r="1.8"/><circle cx="48" cy="22" r="1.8"/><circle cx="48" cy="31" r="1.8"/></g>
<g fill="#3f5686"><circle cx="48" cy="17.5" r="1.8"/><circle cx="48" cy="26.5" r="1.8"/><circle cx="48" cy="35.5" r="1.8"/></g>
<g fill="#f6e0e0"><rect x="52" y="12" width="14" height="2"/><rect x="52" y="16.5" width="14" height="2"/><rect x="52" y="21" width="14" height="2"/><rect x="52" y="25.5" width="14" height="2"/><rect x="52" y="30" width="14" height="2"/><rect x="52" y="34.5" width="14" height="2"/></g></svg>
<div class="t" style="left:25.00px;width:20px;text-align:center;top:679.80px;font-size:15px;color:#333;">8</div>
<svg style="left:73px;top:730px;" width="17" height="17" viewBox="0 0 17 17"><path d="M8.5 0 V17 M0 8.5 H17" stroke="#333" stroke-width="2"/></svg>
<div class="a" style="left:163px;top:189px;width:1px;height:576px;background:#d9dce2;"></div>
<div class="a" style="left:164px;top:189px;width:2.5px;height:576px;background:#e8eaef;"></div>
<svg style="left:806px;top:193px;" width="7" height="5" viewBox="0 0 7 5"><path d="M0 5 L3.5 0 L7 5 Z" fill="#666"/></svg>
<div class="a" style="left:806px;top:234px;width:7px;height:47px;background:#cdd1d6;border-radius:4px;"></div>
<svg style="left:806px;top:709.7px;" width="7" height="5" viewBox="0 0 7 5"><path d="M0 0 L3.5 5 L7 0 Z" fill="#666"/></svg>
<svg style="left:806px;top:727.3px;" width="7" height="8.6" viewBox="0 0 7 8.6"><path d="M0 4 L3.5 0 L7 4 Z M0 9 L3.5 5 L7 9 Z" fill="#666"/></svg>
<svg style="left:806px;top:746px;" width="7" height="8.6" viewBox="0 0 7 8.6"><path d="M0 0 L3.5 4 L7 0 Z M0 5 L3.5 9 L7 5 Z" fill="#666"/></svg>
<svg style="left:177px;top:751.8px;" width="5.5" height="6.8" viewBox="0 0 5.5 6.8"><path d="M5 0 L0 3.5 L5 7 Z" fill="#666"/></svg>
<div class="a" style="left:195px;top:751px;width:565px;height:9px;background:#c9ccd3;border-radius:4.5px;"></div>
<svg style="left:783px;top:752.3px;" width="5.5" height="6.7" viewBox="0 0 5.5 6.7"><path d="M0 0 L5 3.5 L0 7 Z" fill="#666"/></svg>
<div class="a" style="left:819px;top:189px;width:3px;height:576px;background:#e7e9ef;"></div>
<div class="a" style="left:0px;top:765px;width:1200px;height:1px;background:#d5d8de;"></div>
<div class="a" style="left:177px;top:295px;width:607.5px;height:341.5px;background:#ec7272;box-shadow:0 1px 4px rgba(0,0,0,.16);"></div>
<svg style="left:189px;top:305px;" width="21" height="22" viewBox="0 0 21 22"><g fill="#fff">
<circle cx="3.6" cy="3.4" r="2.7"/><circle cx="10.5" cy="2.9" r="2.9"/><circle cx="17.4" cy="3.4" r="2.7"/>
<path d="M0.3 8 Q0.8 6.8 3.6 6.8 Q6.4 6.8 6.9 8 L7 15 L5.9 15.5 L5.6 21.7 L4.1 21.7 L3.6 17 L3.1 21.7 L1.6 21.7 L1.3 15.5 L0.2 15 Z"/>
<path d="M6.9 7.6 Q7.5 6.4 10.5 6.4 Q13.5 6.4 14.1 7.6 L14.2 15 L13 15.5 L12.7 21.7 L11.1 21.7 L10.5 17 L9.9 21.7 L8.3 21.7 L8 15.5 L6.8 15 Z"/>
<path d="M14.1 8 Q14.6 6.8 17.4 6.8 Q20.2 6.8 20.7 8 L20.8 15 L19.7 15.5 L19.4 21.7 L17.9 21.7 L17.4 17 L16.9 21.7 L15.4 21.7 L15.1 15.5 L14 15 Z"/>
</g>
<g stroke="#ec7272" stroke-width="0.6"><path d="M6.9 8 V15.5 M14.1 8 V15.5"/></g></svg>
<div class="t" style="left:215.50px;top:311.52px;font-size:16.16px;color:#fdf0f0;transform:scaleX(0.925);transform-origin:0 0;-webkit-text-stroke:0;">LOGO</div>
<div class="t" style="left:559.50px;top:303.39px;font-size:23.4px;color:#fff;-webkit-text-stroke:0;text-shadow:1px 2px 2.5px rgba(80,25,25,.6);">The Coolest Design</div>
<div class="t" style="left:456.00px;width:320px;text-align:right;top:332.01px;font-size:8.85px;color:#fdf0f0;-webkit-text-stroke:0;">Lorem ipsum dolor sit amet, consectetur adipisicing elit, sed do eiusmod</div>
<div class="t" style="left:456.00px;width:320px;text-align:right;top:341.51px;font-size:8.85px;color:#fdf0f0;-webkit-text-stroke:0;">tempor incididunt ut labore et dolore magna aliqua.</div>
<div class="t" style="left:374.80px;width:200px;text-align:center;top:378.90px;font-size:26.7px;color:#fff;-webkit-text-stroke:0;">About Us</div>
<div class="t" style="left:250.00px;width:460px;text-align:center;top:423.32px;font-size:13.5px;color:#fdf0f0;-webkit-text-stroke:0;">Lorem ipsum dolor sit amet, consectetur adipisicing elit, sed do</div>
<div class="t" style="left:249.70px;width:460px;text-align:center;top:439.07px;font-size:13.5px;color:#fdf0f0;-webkit-text-stroke:0;">eiusmod tempor incididunt ut labore et dolore magna aliqua. Lorem</div>
<div class="t" style="left:250.00px;width:460px;text-align:center;top:454.82px;font-size:13.5px;color:#fdf0f0;-webkit-text-stroke:0;">ipsum dolor sit amet.</div>
<svg style="left:290px;top:512px;" width="83" height="53" viewBox="0 0 83 53"><path d="M0.5 26.5 C14 5 29 0.5 41.5 0.5 C54 0.5 69 5 82.5 26.5 C69 48 54 52.5 41.5 52.5 C29 52.5 14 48 0.5 26.5 Z" fill="#fff"/>
<circle cx="40.7" cy="26.3" r="13" fill="#72a7c7"/><circle cx="40.7" cy="26.3" r="6.6" fill="#363a3a"/></svg>
<svg style="left:433px;top:493px;" width="88" height="76" viewBox="0 0 88 76"><path d="M1 36 H25.5 V74.5 H3 Z" fill="#4a90e2"/>
<path d="M25.5 37 C30 33 35 26 39 19 C42 13 43 8 43 3 C43 0.5 46 0 48 1.5 C52 4 54 9 54 15 C54 21 52 27 50 31 H83 C86 31 87.5 33 87.5 35.5 C87.5 38 86 40 84 40.5 C86 41.5 86.5 43.5 86 45.5 C85.5 47.5 84 48.5 82 49 C83.5 50 84 52 83.5 54 C83 56 81.5 57 79.5 57.5 C81 58.5 81.5 60.5 81 62.5 C80.5 65 78.5 66.5 76 66.5 L75.5 71.5 H25.5 Z" fill="#fff"/></svg>
<svg style="left:581px;top:495px;" width="91" height="71" viewBox="0 0 91 71"><path d="M11.5 4.5 H21 V16 H31 V25 H21 V36 H11.5 V25 H0.5 V16 H11.5 Z" fill="#4a90e2"/>
<path d="M5 69 C4 64 6 61 10 59 L32 48 L40 42.5 L47.5 49 L55 42.5 L63 48 L85 59 C89 61 90.5 64 89.5 69 Z" fill="#3b403d"/>
<path d="M47.5 1 C58 1 65.5 9 65.5 20 C65.5 22 65 25 64.5 27 C66 27.5 66 30 65 32 C64 34 63 35 62 35.5 C59 42 53 48 47.5 50 C42 48 36 42 33 35.5 C32 35 31 34 30 32 C29 30 29 27.5 30.5 27 C30 25 29.5 22 29.5 20 C29.5 9 37 1 47.5 1 Z" fill="#fff"/></svg>
<div class="t" style="left:277.85px;width:100px;text-align:center;top:577.44px;font-size:14.84px;color:#fdf0f0;-webkit-text-stroke:0;">Text here</div>
<div class="t" style="left:427.60px;width:100px;text-align:center;top:577.44px;font-size:14.84px;color:#fdf0f0;-webkit-text-stroke:0;">Text here</div>
<div class="t" style="left:576.50px;width:100px;text-align:center;top:577.44px;font-size:14.84px;color:#fdf0f0;-webkit-text-stroke:0;">Text here</div>
<div class="t" style="left:844.60px;top:208.38px;font-size:16.44px;color:#333;transform:scaleX(0.998);transform-origin:0 0;">Slide Transition</div>
<svg style="left:966px;top:214.2px;" width="7" height="5" viewBox="0 0 7 5"><path d="M0.6 0.6 L3.5 3.5 L6.4 0.6" fill="none" stroke="#333" stroke-width="1.5"/></svg>
<svg style="left:1057px;top:206px;" width="17" height="17" viewBox="0 0 17 17"><path d="M9.5 1.5 L15.5 7.5 L13.5 8.5 L10.5 11.5 L10 15 L2 7 L5.5 6.5 L8.5 3.5 Z" fill="none" stroke="#444" stroke-width="1.3" stroke-linejoin="round"/>
<path d="M6 11 L1 16" stroke="#444" stroke-width="1.3"/></svg>
<svg style="left:1092px;top:209px;" width="13" height="13" viewBox="0 0 13 13"><path d="M0.5 0.5 L12.5 12.5 M12.5 0.5 L0.5 12.5" stroke="#444" stroke-width="1.3"/></svg>
<div class="t" style="left:840.20px;top:249.02px;font-size:13.56px;color:#333;transform:scaleX(1.046);transform-origin:0 0;">Apply to Selected Slides</div>
<div class="a" style="left:840px;top:269px;width:273px;height:238px;background:#fff;border-radius:6px;box-shadow:0 0.5px 1.5px rgba(0,0,0,.10);"></div>
<div class="a" style="left:1101px;top:275px;width:6px;height:82px;background:#dcdde0;border-radius:3px;"></div>
<div class="a" style="left:852px;top:280px;width:77px;height:65px;background:#e8e8e9;border-radius:5px;"></div>
<svg style="left:876px;top:290.5px;" width="29" height="29" viewBox="0 0 29 29"><rect x="0.6" y="0.6" width="27.8" height="27.8" rx="2.5" fill="#fff" stroke="#888" stroke-width="1.1" stroke-dasharray="2.2 2"/></svg>
<svg style="left:959px;top:288px;" width="37" height="35" viewBox="0 0 37 35"><rect x="16" y="15.5" width="20" height="19" fill="#fff" stroke="#a8c2f4" stroke-width="1"/>
<rect x="8.5" y="8" width="20" height="19" fill="#9ab9f5" stroke="#4a7ef0" stroke-width="1"/>
<rect x="1" y="1" width="21" height="18" fill="#4a7ef0" stroke="#3a6ae0" stroke-width="1"/></svg>
<svg style="left:1046px;top:289px;" width="38" height="34" viewBox="0 0 38 34"><rect x="0.5" y="0.5" width="26" height="22" fill="#dce8fc" stroke="#8fb0f0" stroke-width="1"/>
<rect x="10" y="10.5" width="27" height="22.5" fill="#4a7ef0" stroke="#3a6ae0" stroke-width="1"/>
<rect x="10" y="10.5" width="16.5" height="12" fill="#7aa0ee"/></svg>
<svg style="left:872px;top:364px;" width="37" height="32" viewBox="0 0 37 32"><rect x="11" y="10" width="25" height="21" fill="#dce8fc" stroke="#8fb0f0" stroke-width="1"/>
<rect x="0.5" y="0.5" width="26" height="21.5" fill="#4a7ef0" stroke="#3a6ae0" stroke-width="1"/></svg>
<svg style="left:962px;top:364px;" width="32" height="32" viewBox="0 0 32 32"><defs><linearGradient id="wpg" x1="0" x2="1" y1="0" y2="0"><stop offset="0" stop-color="#fff"/><stop offset="0.45" stop-color="#fff"/><stop offset="0.72" stop-color="#4a7ef0"/><stop offset="1" stop-color="#4a7ef0"/></linearGradient></defs>
<rect x="0.5" y="0.5" width="31" height="31" fill="url(#wpg)" stroke="#8fb0f0" stroke-width="1"/>
<path d="M22 16 H10 M14.5 11.5 L10 16 L14.5 20.5" fill="none" stroke="#111" stroke-width="2.8" stroke-linecap="round" stroke-linejoin="round"/></svg>
<svg style="left:1049px;top:364px;" width="32" height="32" viewBox="0 0 32 32"><defs><linearGradient id="shg" x1="0" x2="0" y1="0" y2="1"><stop offset="0" stop-color="#4a7ef0"/><stop offset="0.4" stop-color="#4a7ef0"/><stop offset="0.75" stop-color="#b8cdf6"/><stop offset="1" stop-color="#dfe8fb"/></linearGradient>
<radialGradient id="shr" cx="0.5" cy="1" r="0.6"><stop offset="0" stop-color="#fff"/><stop offset="0.6" stop-color="#fff" stop-opacity="0.8"/><stop offset="1" stop-color="#fff" stop-opacity="0"/></radialGradient></defs>
<rect x="0.5" y="0.5" width="31" height="31" fill="url(#shg)" stroke="#8fb0f0" stroke-width="1"/>
<path d="M1 31.5 L16 15 L31 31.5 Z" fill="url(#shr)"/></svg>
<svg style="left:875px;top:439px;" width="31" height="31" viewBox="0 0 31 31"><rect x="0.00" y="0.00" width="5.3" height="5.3" fill="#4a7ef0"/><rect x="5.17" y="0.00" width="5.3" height="5.3" fill="#a8c2f6"/><rect x="10.34" y="0.00" width="5.3" height="5.3" fill="#4a7ef0"/><rect x="15.51" y="0.00" width="5.3" height="5.3" fill="#4a7ef0"/><rect x="20.68" y="0.00" width="5.3" height="5.3" fill="#ffffff"/><rect x="25.85" y="0.00" width="5.3" height="5.3" fill="#ffffff"/><rect x="0.00" y="5.17" width="5.3" height="5.3" fill="#ffffff"/><rect x="5.17" y="5.17" width="5.3" height="5.3" fill="#4a7ef0"/><rect x="10.34" y="5.17" width="5.3" height="5.3" fill="#4a7ef0"/><rect x="15.51" y="5.17" width="5.3" height="5.3" fill="#ffffff"/><rect x="20.68" y="5.17" width="5.3" height="5.3" fill="#4a7ef0"/><rect x="25.85" y="5.17" width="5.3" height="5.3" fill="#4a7ef0"/><rect x="0.00" y="10.34" width="5.3" height="5.3" fill="#a8c2f6"/><rect x="5.17" y="10.34" width="5.3" height="5.3" fill="#4a7ef0"/><rect x="10.34" y="10.34" width="5.3" height="5.3" fill="#ffffff"/><rect x="15.51" y="10.34" width="5.3" height="5.3" fill="#4a7ef0"/><rect x="20.68" y="10.34" width="5.3" height="5.3" fill="#ffffff"/><rect x="25.85" y="10.34" width="5.3" height="5.3" fill="#4a7ef0"/><rect x="0.00" y="15.51" width="5.3" height="5.3" fill="#ffffff"/><rect x="5.17" y="15.51" width="5.3" height="5.3" fill="#a8c2f6"/><rect x="10.34" y="15.51" width="5.3" height="5.3" fill="#4a7ef0"/><rect x="15.51" y="15.51" width="5.3" height="5.3" fill="#4a7ef0"/><rect x="20.68" y="15.51" width="5.3" height="5.3" fill="#4a7ef0"/><rect x="25.85" y="15.51" width="5.3" height="5.3" fill="#4a7ef0"/><rect x="0.00" y="20.68" width="5.3" height="5.3" fill="#4a7ef0"/><rect x="5.17" y="20.68" width="5.3" height="5.3" fill="#ffffff"/><rect x="10.34" y="20.68" width="5.3" height="5.3" fill="#4a7ef0"/><rect x="15.51" y="20.68" width="5.3" height="5.3" fill="#4a7ef0"/><rect x="20.68" y="20.68" width="5.3" height="5.3" fill="#ffffff"/><rect x="25.85" y="20.68" width="5.3" height="5.3" fill="#a8c2f6"/><rect x="0.00" y="25.85" width="5.3" height="5.3" fill="#ffffff"/><rect x="5.17" y="25.85" width="5.3" height="5.3" fill="#ffffff"/><rect x="10.34" y="25.85" width="5.3" height="5.3" fill="#ffffff"/><rect x="15.51" y="25.85" width="5.3" height="5.3" fill="#a8c2f6"/><rect x="20.68" y="25.85" width="5.3" height="5.3" fill="#4a7ef0"/><rect x="25.85" y="25.85" width="5.3" height="5.3" fill="#a8c2f6"/><rect x="0.5" y="0.5" width="30" height="30" fill="none" stroke="#7f9fe8" stroke-width="1"/></svg>
<svg style="left:959px;top:436px;" width="37" height="37" viewBox="0 0 37 37"><path d="M3.5 12 A16 16 0 0 1 14 2.5 M33.5 25 A16 16 0 0 1 23 34.5" fill="none" stroke="#c8c8c8" stroke-width="1.3"/>
<g transform="rotate(-32 18.5 18.5)"><rect x="3" y="9" width="31" height="19" rx="2" fill="#4a7ef0" stroke="#3a6ae0" stroke-width="0.8"/></g></svg>
<div class="a" style="left:1049px;top:439px;width:31px;height:31px;background:conic-gradient(from 0deg at 50% 50%,#4a7ef0 0deg,#eaf2fd 40deg,#4a7ef0 45deg,#eaf2fd 85deg,#4a7ef0 90deg,#eaf2fd 130deg,#4a7ef0 135deg,#eaf2fd 175deg,#4a7ef0 180deg,#eaf2fd 220deg,#4a7ef0 225deg,#eaf2fd 265deg,#4a7ef0 270deg,#eaf2fd 310deg,#4a7ef0 315deg,#eaf2fd 355deg,#4a7ef0 360deg);border:1px solid #8fb0f0;"></div>
<div class="t" style="left:873.40px;top:327.54px;font-size:13.42px;color:#333;transform:scaleX(1.075);transform-origin:0 0;">None</div>
<div class="t" style="left:956.70px;top:327.54px;font-size:13.42px;color:#333;transform:scaleX(1.093);transform-origin:0 0;">Morph</div>
<div class="t" style="left:1050.60px;top:327.54px;font-size:13.42px;color:#333;transform:scaleX(0.938);transform-origin:0 0;">Fade</div>
<div class="t" style="left:880.10px;top:401.94px;font-size:13.42px;color:#333;transform:scaleX(1.040);transform-origin:0 0;">Cut</div>
<div class="t" style="left:962.50px;top:401.94px;font-size:13.42px;color:#333;transform:scaleX(1.019);transform-origin:0 0;">Wipe</div>
<div class="t" style="left:1045.40px;top:401.94px;font-size:13.42px;color:#333;transform:scaleX(0.997);transform-origin:0 0;">Shape</div>
<div class="t" style="left:864.80px;top:476.34px;font-size:13.42px;color:#333;transform:scaleX(1.019);transform-origin:0 0;">Dissolve</div>
<div class="t" style="left:961.10px;top:476.34px;font-size:13.42px;color:#333;transform:scaleX(1.001);transform-origin:0 0;">News</div>
<div class="t" style="left:1045.40px;top:476.34px;font-size:13.42px;color:#333;transform:scaleX(1.017);transform-origin:0 0;">Wheel</div>
<div class="t" style="left:840.40px;top:547.06px;font-size:14.11px;color:#222;font-weight:700;transform:scaleX(1.044);transform-origin:0 0;">Modify transition</div>
<div class="t" style="left:840.40px;top:598.92px;font-size:13.56px;color:#333;transform:scaleX(1.038);transform-origin:0 0;">Effect Options:</div>
<div class="a" style="left:1037.5px;top:582px;width:75px;height:47px;background:#e4e6ea;border-radius:5px;border:1px solid #d8dbe0;"></div>
<svg style="left:1045px;top:594px;" width="22" height="23" viewBox="0 0 22 23"><rect x="0.6" y="0.6" width="20.8" height="21.8" rx="3" fill="#f2f3f5" stroke="#d0d2d6" stroke-width="1" stroke-dasharray="2 1.6"/></svg>
<svg style="left:1093px;top:603px;" width="10" height="6" viewBox="0 0 10 6"><path d="M0.5 0.5 L5 5 L9.5 0.5" fill="none" stroke="#c2c5ca" stroke-width="1.2"/></svg>
<div class="t" style="left:840.10px;top:648.82px;font-size:13.56px;color:#333;transform:scaleX(0.993);transform-origin:0 0;">Speed:</div>
<div class="a" style="left:984.5px;top:641px;width:128px;height:26px;background:#fff;border-radius:4px;box-shadow:0 0.5px 1.5px rgba(0,0,0,.18);"></div>
<div class="t" style="left:994.80px;top:648.94px;font-size:13.42px;color:#222;transform:scaleX(1.008);transform-origin:0 0;">02.00</div>
<svg style="left:1097px;top:644px;" width="10" height="20" viewBox="0 0 10 20"><path d="M0.8 5 L5 1 L9.2 5 M0.8 15 L5 19 L9.2 15" fill="none" stroke="#555" stroke-width="1.2"/></svg>
<div class="t" style="left:840.10px;top:682.62px;font-size:13.56px;color:#333;transform:scaleX(1.010);transform-origin:0 0;">Sound:</div>
<div class="a" style="left:984.5px;top:675px;width:128px;height:26px;background:#fff;border-radius:4px;box-shadow:0 0.5px 1.5px rgba(0,0,0,.18);"></div>
<div class="t" style="left:994.80px;top:682.62px;font-size:13.56px;color:#222;transform:scaleX(1.067);transform-origin:0 0;">[No Sound]</div>
<svg style="left:1094px;top:684.5px;" width="11" height="6" viewBox="0 0 11 6"><path d="M0.5 0.5 L5.5 5.5 L10.5 0.5" fill="none" stroke="#555" stroke-width="1.3"/></svg>
<div class="a" style="left:847px;top:712.5px;width:16px;height:16px;background:#e6e8eb;border-radius:3px;border:1px solid #cfd2d6;"></div>
<div class="t" style="left:870.00px;top:715.32px;font-size:13.56px;color:#a0a2a6;transform:scaleX(1.076);transform-origin:0 0;">Loop until next sound</div>
<div class="a" style="left:1122px;top:248px;width:7px;height:320px;background:#c9cdd4;border-radius:3.5px;"></div>
<div class="a" style="left:1129px;top:189px;width:4px;height:576px;background:#e6e8ee;"></div>
<div class="a" style="left:1158px;top:214px;width:17px;height:2px;background:#555;border-radius:1px;"></div>
<div class="a" style="left:1147px;top:235px;width:38px;height:37.5px;background:#d5d8dd;border-radius:7px;"></div>
<svg style="left:1157px;top:244px;" width="20" height="20" viewBox="0 0 20 20"><path d="M12 4.5 V1 H1 V11 H5.5" fill="none" stroke="#444" stroke-width="1.4"/>
<rect x="6" y="5.5" width="13" height="10" fill="none" stroke="#444" stroke-width="1.4"/>
<path d="M2 13 C2 17 4 18.5 8 18.5 M6 16.5 L8.5 18.5 L6 20.5" fill="none" stroke="#444" stroke-width="1.3"/></svg>
<svg style="left:1155px;top:291px;" width="22" height="21" viewBox="0 0 22 21"><path d="M11 15.3 L16.88 19.09 L15.09 12.33 L20.51 7.91 L13.53 7.52 L11 1 L8.47 7.52 L1.49 7.91 L5.2 11" fill="none" stroke="#444" stroke-width="1.4" stroke-linejoin="round"/>
<path d="M2 12.5 H7 M2.5 15.5 H8.5 M5 18.5 H9.5" stroke="#444" stroke-width="1.3"/></svg>
<svg style="left:1156px;top:339px;" width="20" height="20" viewBox="0 0 20 20"><path d="M1 5 H4 M10 5 H19 M1 14.5 H10 M16 14.5 H19" stroke="#444" stroke-width="1.4"/>
<circle cx="7" cy="5" r="3" fill="none" stroke="#444" stroke-width="1.4"/><circle cx="13" cy="14.5" r="3" fill="none" stroke="#444" stroke-width="1.4"/></svg>
<svg style="left:1156px;top:387px;" width="21" height="21" viewBox="0 0 21 21"><path d="M3.5 6 A9 9 0 1 1 2 11" fill="none" stroke="#444" stroke-width="1.4"/>
<path d="M1.5 2.5 L3.5 6.5 L7.5 5" fill="none" stroke="#444" stroke-width="1.4"/>
<path d="M11 6 V11 L14.5 14" fill="none" stroke="#444" stroke-width="1.4"/></svg>
<svg style="left:1156px;top:436px;" width="20" height="20" viewBox="0 0 20 20"><circle cx="10" cy="10" r="9" fill="none" stroke="#444" stroke-width="1.4"/>
<path d="M7 7.5 C7 5.5 8.5 4.5 10 4.5 C11.8 4.5 13 5.7 13 7.3 C13 9.5 10 10 10 12.5" fill="none" stroke="#444" stroke-width="1.4"/>
<circle cx="10" cy="15" r="1" fill="#444"/></svg>
<svg style="left:1156px;top:491px;" width="20" height="6" viewBox="0 0 20 6"><circle cx="3" cy="3" r="2.2" fill="none" stroke="#444" stroke-width="1.2"/><circle cx="10" cy="3" r="2.2" fill="none" stroke="#444" stroke-width="1.2"/><circle cx="17" cy="3" r="2.2" fill="none" stroke="#444" stroke-width="1.2"/></svg>
<div class="t" style="left:16.40px;top:774.70px;font-size:13.70px;color:#333;transform:scaleX(1.044);transform-origin:0 0;">Slide 2 / 20</div>
<div class="a" style="left:99px;top:770px;width:1px;height:20px;background:#d8dbe0;"></div>
<svg style="left:118px;top:772px;" width="16" height="15" viewBox="0 0 16 15"><path d="M1 1.5 H10 M5.5 1.5 V14 H2.5" fill="none" stroke="#444" stroke-width="1.3"/><path d="M8.5 8 L14.5 14 M14.5 8 L8.5 14" stroke="#444" stroke-width="1.3"/></svg>
<div class="t" style="left:142.10px;top:774.70px;font-size:13.70px;color:#333;transform:scaleX(1.035);transform-origin:0 0;">Font Missing</div>
<svg style="left:423px;top:772px;" width="16" height="16" viewBox="0 0 16 16"><rect x="0.7" y="0.7" width="14.6" height="14.6" rx="1.5" fill="none" stroke="#555" stroke-width="1.3"/><path d="M6 4 V10 H10" fill="none" stroke="#555" stroke-width="1.3"/></svg>
<div class="a" style="left:455px;top:770px;width:1px;height:20px;background:#d8dbe0;"></div>
<svg style="left:474px;top:772px;" width="16" height="15" viewBox="0 0 16 15"><path d="M0 2 H6 M0 7.5 H15 M0 13 H15 M9 3.5 L11.5 1 L14 3.5" fill="none" stroke="#555" stroke-width="1.3"/></svg>
<div class="t" style="left:496.70px;top:774.00px;font-size:13.70px;color:#333;transform:scaleX(1.052);transform-origin:0 0;">Notes</div>
<svg style="left:540.7px;top:778.3px;" width="7" height="5" viewBox="0 0 7 5"><path d="M0.6 0.6 L3.5 3.5 L6.4 0.6" fill="none" stroke="#333" stroke-width="1.4"/></svg>
<svg style="left:574px;top:771px;" width="17" height="17" viewBox="0 0 17 17"><path d="M9 3 H1 V13.5 H4 L6 16 L8 13.5 H15.5 V9" fill="none" stroke="#444" stroke-width="1.3" stroke-linejoin="round"/><path d="M13 0.5 V6.5 M10 3.5 H16" stroke="#444" stroke-width="1.3"/></svg>
<div class="t" style="left:597.20px;top:774.00px;font-size:13.70px;color:#333;transform:scaleX(1.058);transform-origin:0 0;">Comment</div>
<div class="a" style="left:678px;top:770px;width:1px;height:20px;background:#d8dbe0;"></div>
<div class="a" style="left:688px;top:765px;width:29px;height:29px;background:#d5d8dd;border-radius:3px;"></div>
<svg style="left:694px;top:772px;" width="17" height="15" viewBox="0 0 17 15"><rect x="0.7" y="0.7" width="15.6" height="13.6" rx="1.5" fill="none" stroke="#444" stroke-width="1.3"/><path d="M5.5 1 V14" stroke="#444" stroke-width="1.3"/></svg>
<svg style="left:732px;top:771px;" width="17" height="17" viewBox="0 0 17 17"><rect x="0.7" y="0.7" width="6" height="6" rx="1" fill="none" stroke="#444" stroke-width="1.3"/><rect x="10.3" y="0.7" width="6" height="6" rx="1" fill="none" stroke="#444" stroke-width="1.3"/><rect x="0.7" y="10.3" width="6" height="6" rx="1" fill="none" stroke="#444" stroke-width="1.3"/><rect x="10.3" y="10.3" width="6" height="6" rx="1" fill="none" stroke="#444" stroke-width="1.3"/></svg>
<svg style="left:771px;top:772px;" width="18" height="16" viewBox="0 0 18 16"><path d="M9 3 C7 1.5 4 1 1 1.5 V14 C4 13.5 7 14 9 15 C11 14 14 13.5 17 14 V1.5 C14 1 11 1.5 9 3 Z M9 3 V15" fill="none" stroke="#444" stroke-width="1.3" stroke-linejoin="round"/></svg>
<div class="a" style="left:805px;top:770px;width:1px;height:20px;background:#d8dbe0;"></div>
<div class="a" style="left:817px;top:769px;width:24px;height:21px;background:#e5462f;border-radius:3px;"></div>
<svg style="left:825px;top:774.5px;" width="9" height="10" viewBox="0 0 9 10"><path d="M0.5 0.5 L8.5 5 L0.5 9.5 Z" fill="#fff"/></svg>
<div class="a" style="left:853px;top:770px;width:1px;height:20px;background:#d8dbe0;"></div>
<svg style="left:869px;top:771px;" width="18" height="17" viewBox="0 0 18 17"><path d="M1 5 V3 A2 2 0 0 1 3 1 H5 M13 1 H15 A2 2 0 0 1 17 3 V5 M17 12 V14 A2 2 0 0 1 15 16 H13 M5 16 H3 A2 2 0 0 1 1 14 V12" fill="none" stroke="#444" stroke-width="1.4"/><rect x="3.7" y="3.7" width="10.6" height="9.6" rx="1" fill="none" stroke="#444" stroke-width="1.3"/><path d="M4 6.8 H14" stroke="#444" stroke-width="1.2"/></svg>
<div class="t" style="left:915.40px;top:773.90px;font-size:13.70px;color:#333;transform:scaleX(0.960);transform-origin:0 0;">52%</div>
<svg style="left:959.7px;top:777.8px;" width="7" height="5" viewBox="0 0 7 5"><path d="M0.6 0.6 L3.5 3.5 L6.4 0.6" fill="none" stroke="#333" stroke-width="1.4"/></svg>
<div class="a" style="left:988px;top:778.3px;width:15px;height:2px;background:#2a2a2a;"></div>
<div class="a" style="left:1020px;top:778.3px;width:28px;height:2px;background:#3a66d8;"></div>
<div class="a" style="left:1048px;top:778.5px;width:99px;height:1.5px;background:#b8bbbf;"></div>
<svg style="left:1046px;top:773px;" width="12" height="12" viewBox="0 0 12 12"><circle cx="6" cy="6" r="5.2" fill="#9a9a9a" stroke="#fff" stroke-width="1.8"/></svg>
<svg style="left:1163px;top:771.5px;" width="15" height="15" viewBox="0 0 15 15"><path d="M7.5 0 V15 M0 7.5 H15" stroke="#2a2a2a" stroke-width="1.9"/></svg>
</body></html>
